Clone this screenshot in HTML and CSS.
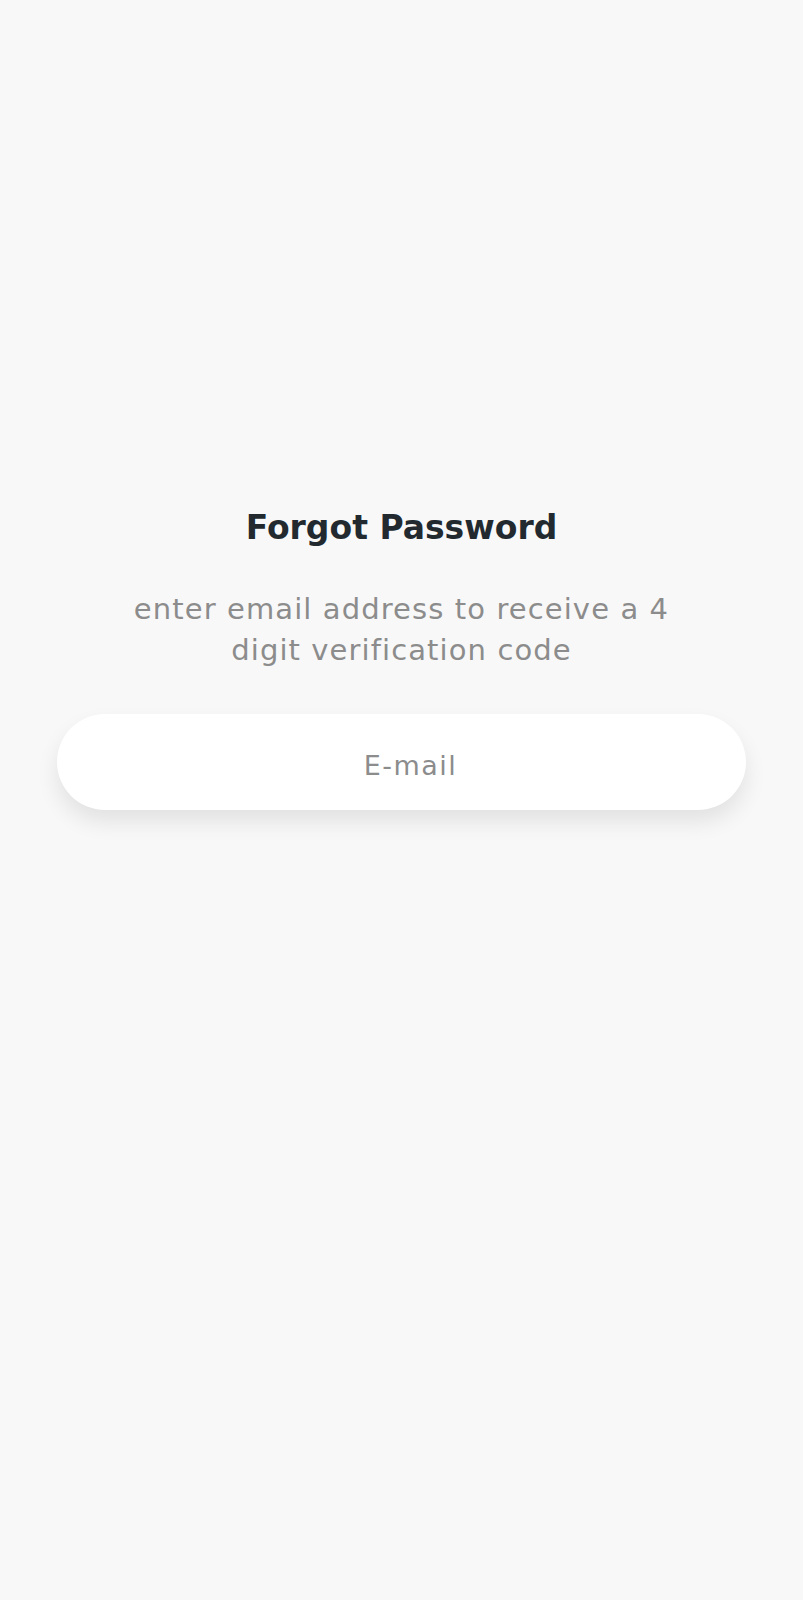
FILE: index.html
```html
<!DOCTYPE html>
<html>
<head>
<meta charset="utf-8">
<link rel="stylesheet" href="styles.css">
</head>
<body>
<main class="screen">
  <h1 class="title">Forgot Password</h1>
  <p class="subtitle">enter email address to receive a 4<br>digit verification code</p>
  <div class="field">
    <input class="input" type="email" placeholder="E-mail">
  </div>
</main>
</body>
</html>
```

FILE: styles.css
```css
html, body {
  margin: 0;
  padding: 0;
  background: #f8f8f8;
}
.screen {
  min-height: 1600px;
  box-sizing: border-box;
  padding: 507px 57px 0 57px;
  display: flex;
  flex-direction: column;
  align-items: center;
  font-family: "DejaVu Sans", "Liberation Sans", sans-serif;
}
.title {
  margin: 0;
  font-size: 33px;
  font-weight: 700;
  color: #222a30;
  line-height: 42px;
}
.subtitle {
  margin: 40px 0 0 0;
  font-size: 29px;
  letter-spacing: 1.1px;
  line-height: 41px;
  color: #8c8c8c;
  text-align: center;
}
.field {
  align-self: stretch;
  margin-top: 43px;
}
.input {
  display: block;
  width: 100%;
  box-sizing: border-box;
  height: 96px;
  padding: 6px 0 0 18px;
  border: none;
  border-radius: 48px;
  background: #ffffff;
  box-shadow: 0 12px 22px rgba(0, 0, 0, 0.09);
  font-family: "DejaVu Sans", "Liberation Sans", sans-serif;
  font-size: 27px;
  letter-spacing: 1.5px;
  text-align: center;
  color: #333;
  outline: none;
}
.input::placeholder {
  color: #8c8c8c;
}
```
